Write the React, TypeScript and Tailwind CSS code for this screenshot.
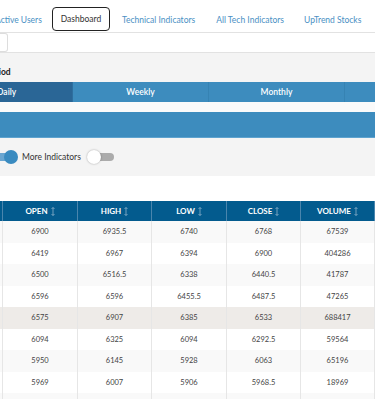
const rows = [
  ["6900", "6935.5", "6740", "6768", "67539"],
  ["6419", "6967", "6394", "6900", "404286"],
  ["6500", "6516.5", "6338", "6440.5", "41787"],
  ["6596", "6596", "6455.5", "6487.5", "47265"],
  ["6575", "6907", "6385", "6533", "688417"],
  ["6094", "6325", "6094", "6292.5", "59564"],
  ["5950", "6145", "5928", "6063", "65196"],
  ["5969", "6007", "5906", "5968.5", "18969"],
  ["", "", "", "", ""],
];

const cols = "grid grid-cols-[3px_75px_74px_75px_74px_74px]";

function SortIcon() {
  return (
    <svg width="4" height="9" viewBox="0 0 4 9" className="ml-[3px]">
      <path d="M2 0.5 L2 8.5 M0.5 2 L2 0.5 L3.5 2 M0.5 7 L2 8.5 L3.5 7" stroke="#8fb3cc" strokeWidth="0.8" fill="none" />
    </svg>
  );
}

export default function App() {
  return (
    <div className="w-[375px] h-[399px] overflow-hidden bg-white font-['Lato',sans-serif] text-[#333]">
      {/* top nav */}
      <nav className="h-8 bg-white flex items-start text-[8.5px] text-[#4a90c4]">
        <span className="-ml-[5px] mt-[14px] w-[51px]">Active Users</span>
        <span className="mt-[7px] ml-[6px] h-6 w-[58px] rounded-[4px] border-[1.5px] border-[#222] text-[#333] flex items-center justify-center">
          Dashboard
        </span>
        <span className="mt-[14px] ml-[12px]">Technical Indicators</span>
        <span className="mt-[14px] ml-[21px]">All Tech Indicators</span>
        <span className="mt-[14px] ml-[20px]">UpTrend Stocks</span>
      </nav>
      <div className="h-[21px] bg-white border-t border-b border-[#e2e2e2] flex items-center">
        <div className="h-[19px] w-[8px] rounded-r-[3px] border border-l-0 border-[#ddd] bg-white" />
      </div>

      {/* period panel */}
      <div className="bg-[#f4f4f4]">
        <div className="pt-[13px] h-[29px] text-[8.5px] font-bold text-[#222] -ml-[14px]">Period</div>
        <div className="flex h-[20px] bg-[#3d8cbe] text-white text-[8.5px] font-semibold">
          <div className="w-[73px] bg-[#2a6696] flex items-center border-r border-[#2e6f9f]">
            <span className="-ml-[3px]">Daily</span>
          </div>
          <div className="w-[136px] flex items-center justify-center border-r border-[#3683b3]">Weekly</div>
          <div className="w-[136px] flex items-center justify-center border-r border-[#3683b3]">Monthly</div>
          <div className="flex-1" />
        </div>
        <div className="h-[10px] bg-[#fafafa]" />
        <div className="h-[26px] bg-[#3d8cbe] border-b border-[#5ea3cf]" />
        <div className="h-[38px] flex items-center">
          <div className="relative w-[18px] h-[14px] flex items-center">
            <div className="h-[8px] w-[12px] bg-[#6aa6d1] rounded-r-full" />
            <div className="absolute left-[4px] top-0 w-[14px] h-[14px] rounded-full bg-[#3a8bc0]" />
          </div>
          <span className="ml-[4px] text-[8.5px] text-[#333]">More Indicators</span>
          <div className="relative ml-[6px] w-[27px] h-[14px] flex items-center">
            <div className="ml-[5px] h-[8px] w-[22px] bg-[#ababab] rounded-full" />
            <div className="absolute left-0 top-0 w-[14px] h-[14px] rounded-full bg-white shadow-[0_0_2px_rgba(0,0,0,0.35)]" />
          </div>
        </div>
      </div>

      {/* table */}
      <div className="mt-[25px]">
        <div className={`${cols} h-[20px] bg-[#035b8e] text-white text-[8px] font-bold`}>
          <div className="border-r border-[#4a85ad]" />
          {["OPEN", "HIGH", "LOW", "CLOSE", "VOLUME"].map((h) => (
            <div key={h} className="flex items-center justify-center border-r border-[#4a85ad]">
              {h}
              <SortIcon />
            </div>
          ))}
        </div>
        {rows.map((r, i) => (
          <div
            key={i}
            className={`${cols} h-[21.5px] text-[7.5px] text-[#444] ${
              i === 4 ? "bg-[#eeebe8]" : i % 2 === 0 ? "bg-[#f9f9f9]" : "bg-white"
            }`}
          >
            <div className="border-r border-[#e6e6e6]" />
            {r.map((v, j) => (
              <div key={j} className="flex items-center justify-center border-r border-[#e6e6e6]">
                {v}
              </div>
            ))}
          </div>
        ))}
      </div>
    </div>
  );
}
